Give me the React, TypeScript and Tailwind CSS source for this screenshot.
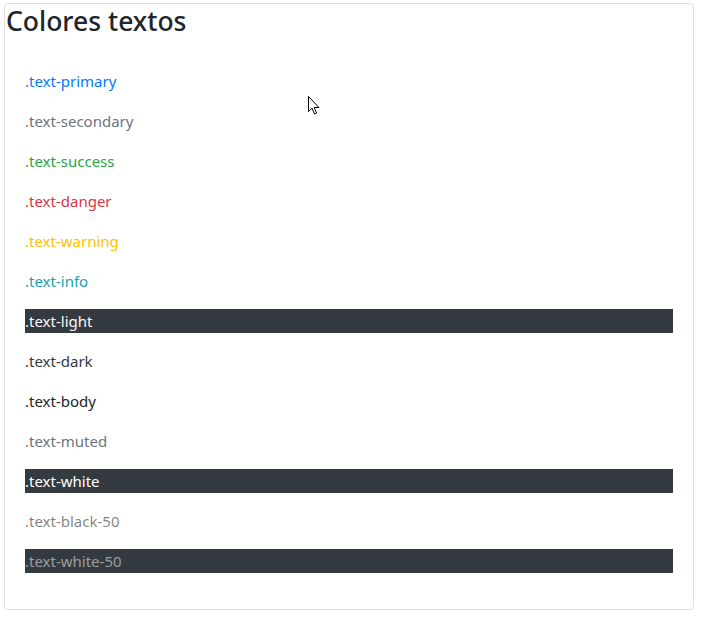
import React from "react";

const rows: { label: string; cls: string }[] = [
  { label: ".text-primary", cls: "text-[#007bff]" },
  { label: ".text-secondary", cls: "text-[#6c757d]" },
  { label: ".text-success", cls: "text-[#28a745]" },
  { label: ".text-danger", cls: "text-[#dc3545]" },
  { label: ".text-warning", cls: "text-[#ffc107]" },
  { label: ".text-info", cls: "text-[#17a2b8]" },
  { label: ".text-light", cls: "text-[#f8f9fa] bg-[#343a40]" },
  { label: ".text-dark", cls: "text-[#343a40]" },
  { label: ".text-body", cls: "text-[#212529]" },
  { label: ".text-muted", cls: "text-[#6c757d]" },
  { label: ".text-white", cls: "text-white bg-[#343a40]" },
  { label: ".text-black-50", cls: "text-black/50" },
  { label: ".text-white-50", cls: "text-white/50 bg-[#343a40]" },
];

export default function App() {
  return (
    <div className="relative min-h-[618px] bg-white pl-[4px] pt-[3px] font-['Noto_Sans',sans-serif] text-[#212529]">
      <div className="w-[690px] rounded-[4px] border border-[#dfdfdf]">
        <h3 className="m-0 pl-[1px] text-[26.5px] leading-[34px] font-medium text-[#212529]">Colores textos</h3>
        <div className="flex flex-col gap-4 px-5 pt-[31px] pb-[36px]">
          {rows.map((r) => (
            <p key={r.label} className={`m-0 h-6 text-[15px] leading-6 ${r.cls}`}>
              {r.label}
            </p>
          ))}
        </div>
      </div>
      <svg className="absolute left-[308px] top-[96px]" width="13" height="20" viewBox="0 0 13 20">
        <path d="M0.5 0.5 L0.5 15.5 L4 12.2 L6.5 18 L8.6 17.1 L6.2 11.5 L11 11.5 Z" fill="white" stroke="black" strokeWidth="1" strokeLinejoin="miter" />
      </svg>
    </div>
  );
}
